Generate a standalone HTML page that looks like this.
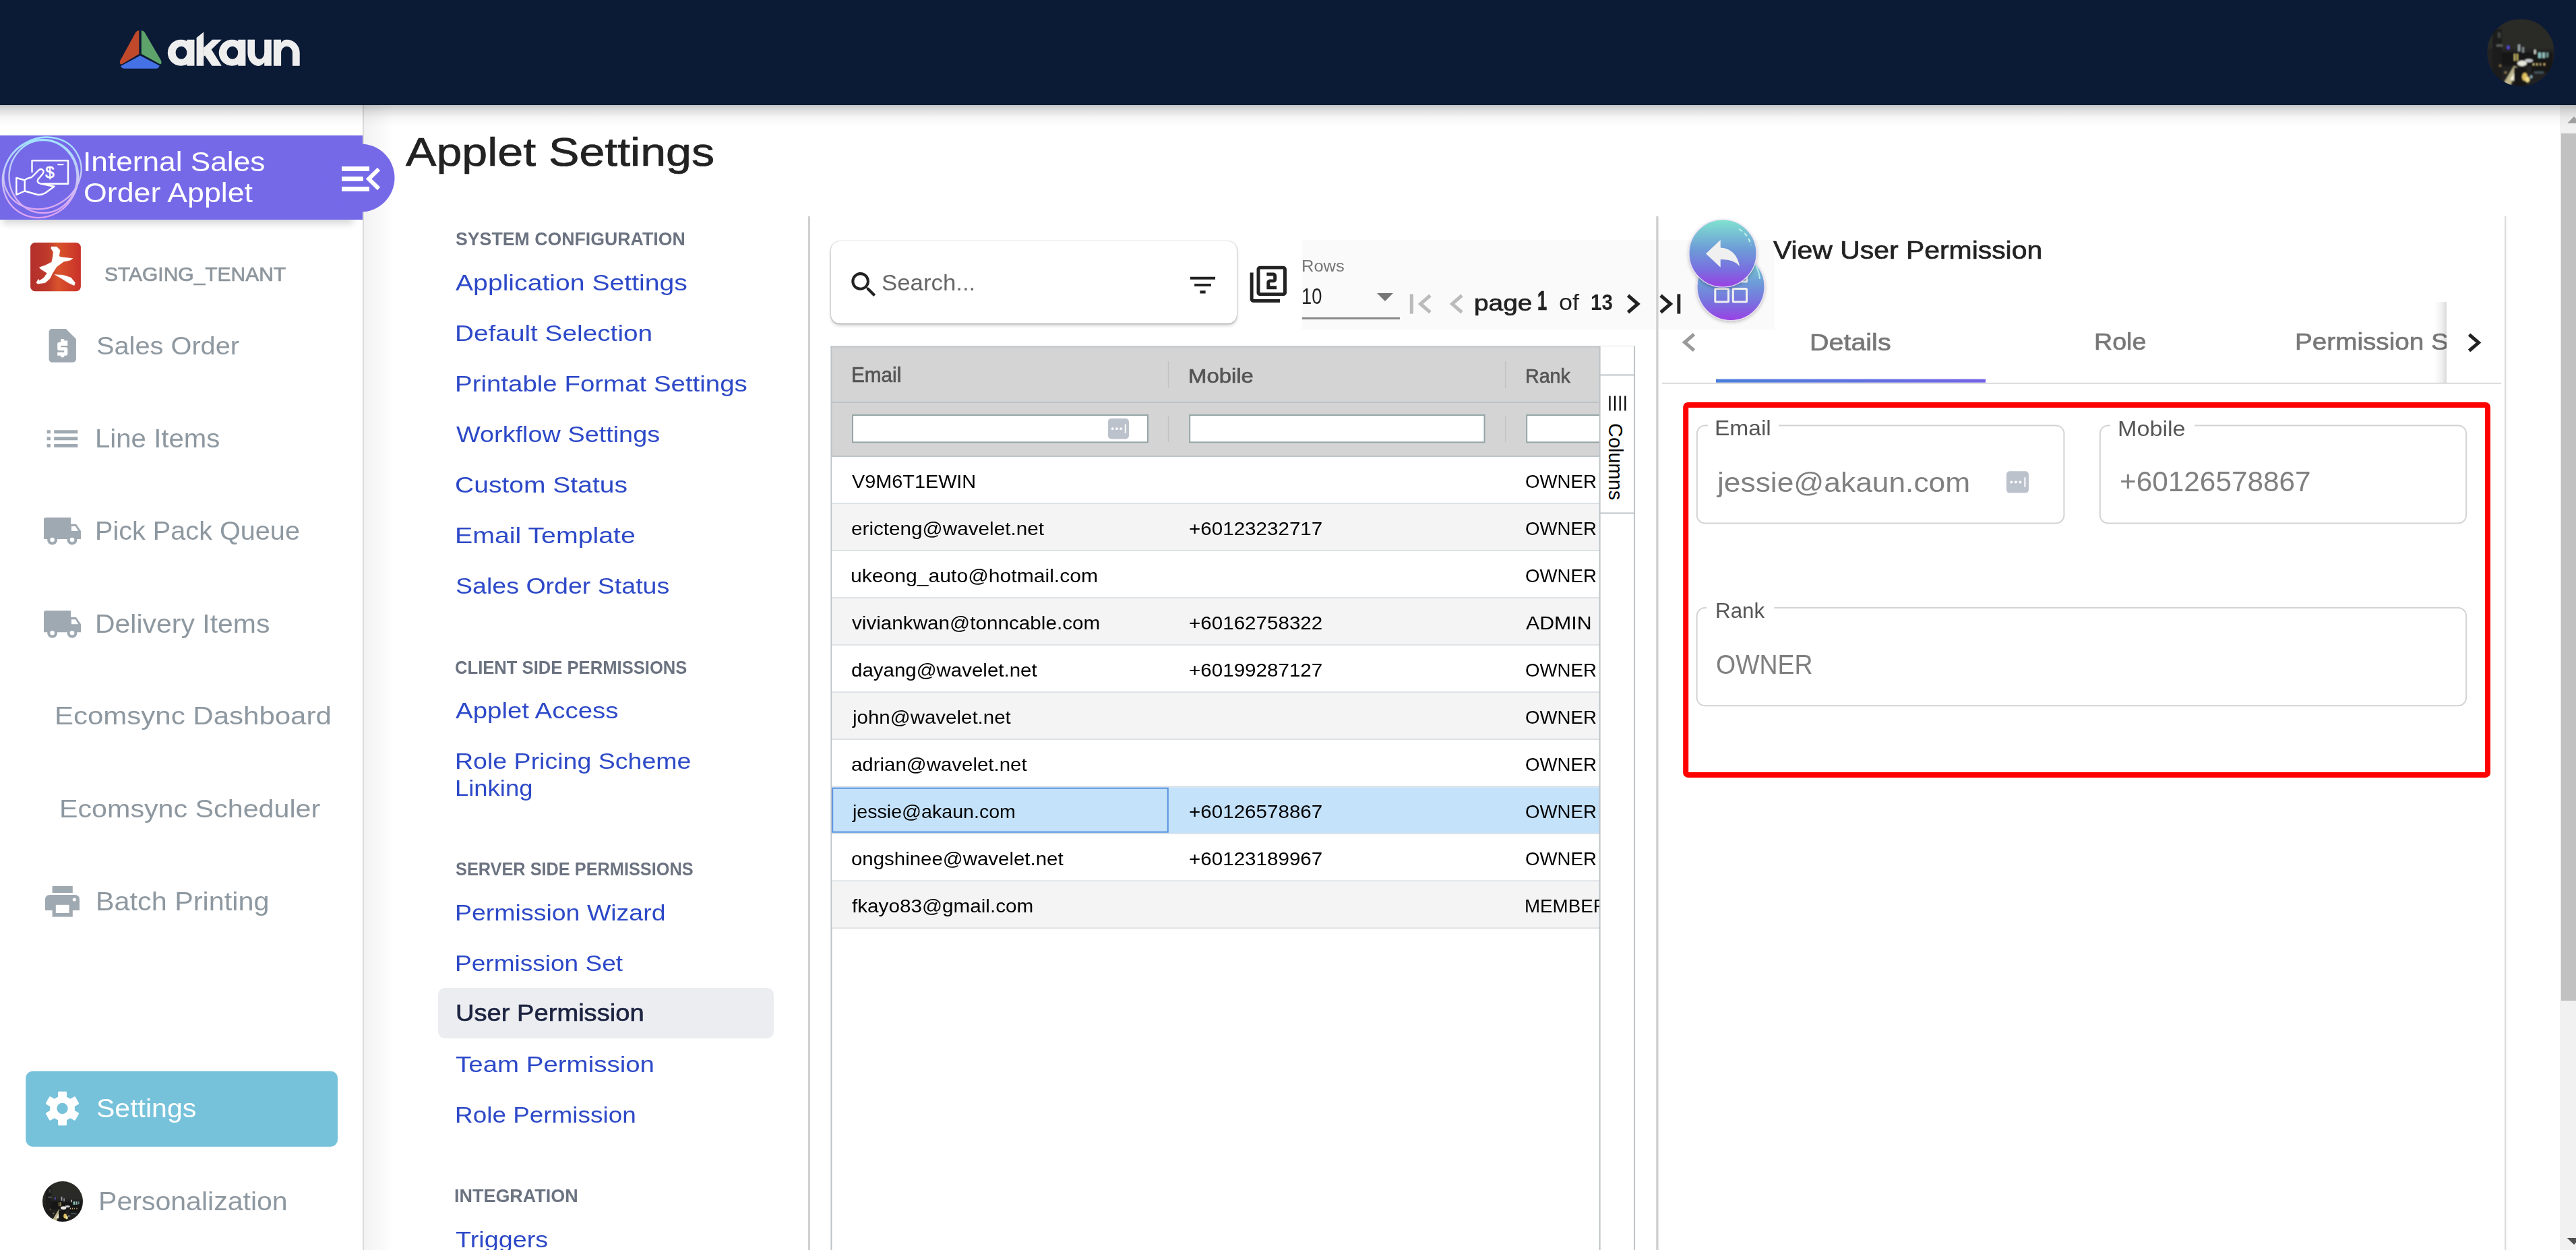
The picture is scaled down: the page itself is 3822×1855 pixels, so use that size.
<!DOCTYPE html>
<html><head><meta charset="utf-8"><title>Applet Settings</title>
<style>
html,body{margin:0;padding:0;width:3822px;height:1855px;overflow:hidden;background:#fff;position:relative}
.t{position:absolute;white-space:nowrap;transform-origin:0 0;}
</style></head><body>
<svg width="0" height="0" style="position:absolute"><filter id="erode" x="-2%" y="-20%" width="104%" height="140%"><feMorphology operator="erode" radius="0.38"/></filter></svg>
<div style="position:absolute;left:0;top:0;width:3822px;height:156px;background:#0b1a35"></div><div style="position:absolute;left:0;top:156px;width:3822px;height:32px;background:linear-gradient(rgba(0,0,0,0.22),rgba(0,0,0,0.12) 25%,rgba(0,0,0,0.035) 58%,rgba(0,0,0,0) 100%);z-index:5"></div><div style="position:absolute;left:538px;top:156px;width:2px;height:1699px;background:#dadada"></div><div style="position:absolute;left:540px;top:156px;width:45px;height:1699px;background:linear-gradient(90deg,rgba(0,0,0,0.05),rgba(0,0,0,0.0))"></div><div style="position:absolute;left:1233px;top:358px;width:602px;height:122px;background:#fff;border-radius:13px;box-shadow:0 3px 5px rgba(0,0,0,0.2),0 1px 2px rgba(0,0,0,0.15),0 0 2px rgba(0,0,0,0.28)"></div><div style="position:absolute;left:0;top:201px;width:520px;height:125px;box-shadow:4px 6px 10px rgba(0,0,0,0.16)"></div>
<svg style="position:absolute;left:0;top:0" width="3822" height="1855" viewBox="0 0 3822 1855"><defs>
<linearGradient id="ring" gradientUnits="userSpaceOnUse" x1="0" y1="203" x2="0" y2="324"><stop offset="0" stop-color="#9fe3ff"/><stop offset="0.5" stop-color="#c9c6f5"/><stop offset="1" stop-color="#e0a0f3"/></linearGradient>
<linearGradient id="fab" x1="0" y1="0" x2="0" y2="1"><stop offset="0" stop-color="#80e3cf"/><stop offset="0.45" stop-color="#6d9ad8"/><stop offset="0.75" stop-color="#7a6ee0"/><stop offset="1" stop-color="#9a40e3"/></linearGradient>
<linearGradient id="tabind" x1="0" y1="0" x2="1" y2="0"><stop offset="0" stop-color="#4a7fdb"/><stop offset="1" stop-color="#7565e6"/></linearGradient>
<linearGradient id="tenant" x1="0" y1="0" x2="1" y2="0"><stop offset="0" stop-color="#b22f2b"/><stop offset="0.35" stop-color="#bf3a2b"/><stop offset="0.55" stop-color="#d9532c"/><stop offset="1" stop-color="#c9312a"/></linearGradient>
<radialGradient id="city" cx="0.5" cy="0.75" r="0.6"><stop offset="0" stop-color="#6b5a3a"/><stop offset="0.5" stop-color="#2d2a26"/><stop offset="1" stop-color="#262525"/></radialGradient>
<linearGradient id="tabshadow" x1="0" y1="0" x2="1" y2="0"><stop offset="0" stop-color="#000" stop-opacity="0"/><stop offset="1" stop-color="#000" stop-opacity="0.13"/></linearGradient>
<filter id="blur1" x="-5%" y="-5%" width="110%" height="110%"><feGaussianBlur stdDeviation="1.3"/></filter><symbol id="citysym" viewBox="0 0 100 100"><clipPath id="cc"><circle cx="50" cy="50" r="50"/></clipPath><g clip-path="url(#cc)"><g filter="url(#blur1)">
<rect x="0" y="0" width="100" height="100" fill="#242321"/>
<rect x="0" y="0" width="100" height="45" fill="#2a2927"/>
<rect x="8" y="15" width="14" height="80" fill="#1c1d1c"/><rect x="14" y="38" width="9" height="3" fill="#5a5f5c"/><rect x="16" y="20" width="4" height="8" fill="#3f4442"/>
<rect x="22" y="50" width="75" height="20" fill="#171615"/>
<rect x="30" y="40" width="3" height="5" fill="#5b4de0"/>
<rect x="46" y="38" width="3" height="10" fill="#9aa4a8"/><rect x="52" y="42" width="3" height="8" fill="#7d8587"/>
<rect x="70" y="46" width="2.5" height="6" fill="#d8d8d0"/>
<rect x="76" y="50" width="4" height="8" fill="#8fc4c0"/><rect x="82" y="50" width="4" height="8" fill="#8fb8b4"/><rect x="88" y="50" width="3" height="7" fill="#6d8f8c"/>
<rect x="40" y="52" width="2" height="10" fill="#c8b870"/><rect x="44" y="52" width="2" height="10" fill="#c0b060"/>
<ellipse cx="52" cy="66" rx="7" ry="4" fill="#e8e8e0"/><ellipse cx="62" cy="62" rx="6" ry="2.5" fill="#c8ccd0"/>
<path d="M22,100 L40,70 L46,72 L34,100 Z" fill="#d8d0a0" opacity="0.85"/>
<path d="M34,90 L44,74 L48,76 L40,92 Z" fill="#f4f0d8"/>
<rect x="40" y="72" width="18" height="28" fill="#141312"/>
<ellipse cx="56" cy="86" rx="4" ry="6" fill="#e0c060"/><ellipse cx="60" cy="90" rx="3" ry="4" fill="#f0e090"/>
<rect x="66" y="68" width="30" height="12" fill="#191817"/>
<rect x="68" y="66" width="2" height="3" fill="#d0c080"/><rect x="73" y="66" width="2" height="3" fill="#c8b878"/><rect x="78" y="66" width="2" height="3" fill="#b0a070"/><rect x="84" y="66" width="2" height="3" fill="#d0b070"/>
<rect x="70" y="78" width="14" height="3" fill="#556a78" opacity="0.7"/><rect x="64" y="84" width="3" height="4" fill="#8aa8b8"/>
<rect x="18" y="68" width="3" height="3" fill="#c0a060" opacity="0.6"/><rect x="26" y="78" width="3" height="3" fill="#d0b070" opacity="0.6"/>
</g></g></symbol>
<filter id="fabsh" x="-20%" y="-20%" width="140%" height="140%"><feDropShadow dx="0" dy="2" stdDeviation="2.5" flood-opacity="0.25"/></filter>
</defs><path d="M206.3,45.2 Q203.5,44.8 201.2,48.2 L178.5,89.5 Q176.2,95 180.5,95.6 L206.3,80.3 Z" fill="#c0492b"/><path d="M209.8,45.2 Q212.5,44.8 214.8,48.2 L238.8,89.5 Q241,95 237.5,95.3 L209.8,80.0 Z" fill="#5ea46a"/><path d="M208,82.6 L236.8,97.6 Q235.5,101.8 231.5,101.8 L184.5,101.8 Q180.5,101.8 179.2,98 Z" fill="#4571e6"/><ellipse cx="268.3" cy="78.25" rx="19.5" ry="19.45" fill="#eeeeee"/><rect x="277.3" y="58.8" width="11.2" height="38.9" fill="#eeeeee"/><ellipse cx="268.95" cy="78.3" rx="8.35" ry="9.5" fill="#0b1a35"/><ellipse cx="344.20000000000005" cy="78.25" rx="19.5" ry="19.45" fill="#eeeeee"/><rect x="353.20000000000005" y="58.8" width="11.2" height="38.9" fill="#eeeeee"/><ellipse cx="344.85" cy="78.3" rx="8.35" ry="9.5" fill="#0b1a35"/><path d="M291.6,56 L302.2,47.4 L302.2,97.7 L291.6,97.7 Z" fill="#eeeeee"/><path d="M302.2,70.8 L315.2,58.8 L328.9,58.8 L309.5,77.5 L302.2,84 Z" fill="#eeeeee"/><path d="M302.2,79 L311.5,70 L328.9,97.7 L314.6,97.7 L305,84 Z" fill="#eeeeee"/><path d="M367.4,58.8 L378,58.8 L378,78 A7.1,9.8 0 0 0 392.2,78 L392.2,58.8 L402.8,58.8 L402.8,97.7 L392.2,97.7 L392.2,92.5 Q388,97.9 383.5,97.9 A16.5,19.6 0 0 1 367.4,78 Z" fill="#eeeeee"/><path d="M405.9,97.7 L417.1,97.7 L417.1,78.3 A8.4,9.5 0 0 1 433.9,78.3 L433.9,97.7 L444.7,97.7 L444.7,78.3 A19.4,19.5 0 0 0 425.3,58.8 Q420,58.8 417.1,63.5 L417.1,58.8 L405.9,58.8 Z" fill="#eeeeee"/><use href="#citysym" x="3690" y="28" width="100" height="100"/><rect x="0" y="201" width="538.00" height="125.00" rx="0" fill="#7569e8" /><circle cx="535" cy="264" r="50.5" fill="#7569e8"/><path d="M115.09,229.30 A59,51 -28 1 1 10.91,284.70 A59,51 -28 1 1 115.09,229.30 Z" fill="none" stroke="url(#ring)" stroke-width="2.4"/><path d="M107.63,292.50 A55,58.5 30 1 1 12.37,237.50 A55,58.5 30 1 1 107.63,292.50 Z" fill="none" stroke="url(#ring)" stroke-width="2.4"/><path d="M114.50,262.00 A50.5,54 0 1 1 13.50,262.00 A50.5,54 0 1 1 114.50,262.00 Z" fill="none" stroke="url(#ring)" stroke-width="2.4"/><g fill="none" stroke="#fff" stroke-width="2.4" stroke-linejoin="round" stroke-linecap="round"><path d="M47.5,255 L47.5,238.2 L101,238.2 L101,272.8 L63,272.8"/><path d="M86.4,244.1 L93.4,244.1"/><path d="M24.3,264 L36.7,267.4 L36.7,283.5 L24.3,289 Z"/><path d="M36.7,267.4 Q40,264.5 47,263 L58,252 Q62,249.5 64.5,253.5 Q65,256 63,258.5 L56.5,266 Q54,271 60,272.6 L80.5,276.8 L67,286.5 Q62,289.5 56,289 L36.7,283.5"/></g><text x="74" y="263.5" font-family="Liberation Sans" font-size="24" font-weight="400" fill="#fff" stroke="#fff" stroke-width="0.6" text-anchor="middle">$</text><rect x="507" y="247" width="41.00" height="7.00" rx="0" fill="#fff" /><rect x="507" y="262" width="32.00" height="7.00" rx="0" fill="#fff" /><rect x="507" y="277" width="41.00" height="7.00" rx="0" fill="#fff" /><path d="M562,251 L547,265.5 L562,280" fill="none" stroke="#fff" stroke-width="6"/><rect x="45.1" y="360.1" width="74.80" height="72.10" rx="7" fill="url(#tenant)" /><path d="M76.1,366.2 84.2,366.2 89.0,371.3 87.6,380.2 90.3,381.5 108.0,383.6 103.9,386.3 94.4,388.3 84.2,395.8 78.1,405.3 74.0,413.5 67.2,419.6 56.3,421.3 53.9,419.6 57.0,414.2 58.7,416.6 65.2,412.1 69.9,405.3 60.4,399.2 58.4,396.8 67.2,393.8 76.7,389.0 78.4,380.9 79.1,374.0 75.7,368.6 Z" fill="#fff" stroke="#fff" stroke-width="0.5" stroke-linejoin="round"/><path d="M81.2,407.4 94.4,408.4 105.3,412.1 111.4,419.6 110.1,423.7 101.2,419.6 91.7,413.5 Z" fill="#fff" stroke="#fff" stroke-width="0.5" stroke-linejoin="round"/><path transform="translate(62.5,483) scale(2.52,2.49)" fill="#9fa9b2" d="M14 2H6c-1.1 0-1.99.9-1.99 2L4 20c0 1.1.89 2 1.99 2H18c1.1 0 2-.9 2-2V8l-6-6zm1 10h-4v1h3c.55 0 1 .45 1 1v3c0 .55-.45 1-1 1h-1v1h-2v-1H9v-2h4v-1h-3c-.55 0-1-.45-1-1v-3c0-.55.45-1 1-1h1V8h2v1h2v2z"/><rect x="69.6" y="638.3" width="5.30" height="5.00" rx="0" fill="#9fa9b2" /><rect x="80.2" y="638.3" width="35.10" height="5.00" rx="0" fill="#9fa9b2" /><rect x="69.6" y="648.3" width="5.30" height="5.00" rx="0" fill="#9fa9b2" /><rect x="80.2" y="648.3" width="35.10" height="5.00" rx="0" fill="#9fa9b2" /><rect x="69.6" y="658.9" width="5.30" height="5.00" rx="0" fill="#9fa9b2" /><rect x="80.2" y="658.9" width="35.10" height="5.00" rx="0" fill="#9fa9b2" /><g transform="translate(0,0)"><path d="M65,771 Q65,768 68,768 L105,768 L105,777.8 L113,777.8 L120,788 L120,800 L65,800 Z" fill="#9fa9b2"/><path d="M106,781 L112,781 L116,788 L106,788 Z" fill="#fff"/><circle cx="77.6" cy="801" r="7.5" fill="#9fa9b2"/><circle cx="107" cy="801" r="7.5" fill="#9fa9b2"/><circle cx="77.6" cy="801" r="3.3" fill="#fff"/><circle cx="107" cy="801" r="3.3" fill="#fff"/></g><g transform="translate(0,138.3)"><path d="M65,771 Q65,768 68,768 L105,768 L105,777.8 L113,777.8 L120,788 L120,800 L65,800 Z" fill="#9fa9b2"/><path d="M106,781 L112,781 L116,788 L106,788 Z" fill="#fff"/><circle cx="77.6" cy="801" r="7.5" fill="#9fa9b2"/><circle cx="107" cy="801" r="7.5" fill="#9fa9b2"/><circle cx="77.6" cy="801" r="3.3" fill="#fff"/><circle cx="107" cy="801" r="3.3" fill="#fff"/></g><rect x="77.6" y="1315" width="30.20" height="10.00" rx="0" fill="#9fa9b2" /><path d="M67,1335 Q67,1328 74,1328 L111,1328 Q118,1328 118,1335 L118,1351 L67,1351 Z" fill="#9fa9b2"/><rect x="77.6" y="1342.4" width="30.20" height="18.20" rx="0" fill="#9fa9b2" /><rect x="82.8" y="1342.8" width="19.80" height="12.20" rx="0" fill="#fff" /><circle cx="110.3" cy="1335" r="2.6" fill="#fff"/><rect x="38.2" y="1589.4" width="462.80" height="112.40" rx="11" fill="#76c2da" /><g><rect x="86.0" y="1619.7" width="13" height="12" rx="1.5" fill="#fff" transform="rotate(0 92.5 1645)"/><rect x="86.0" y="1619.7" width="13" height="12" rx="1.5" fill="#fff" transform="rotate(60 92.5 1645)"/><rect x="86.0" y="1619.7" width="13" height="12" rx="1.5" fill="#fff" transform="rotate(120 92.5 1645)"/><rect x="86.0" y="1619.7" width="13" height="12" rx="1.5" fill="#fff" transform="rotate(180 92.5 1645)"/><rect x="86.0" y="1619.7" width="13" height="12" rx="1.5" fill="#fff" transform="rotate(240 92.5 1645)"/><rect x="86.0" y="1619.7" width="13" height="12" rx="1.5" fill="#fff" transform="rotate(300 92.5 1645)"/><circle cx="92.5" cy="1645" r="18.5" fill="#fff"/><circle cx="92.5" cy="1645" r="8.2" fill="#76c2da"/></g><use href="#citysym" x="63" y="1753" width="60" height="60"/><rect x="650" y="1466" width="498.00" height="75.00" rx="10" fill="#ecedf1" /><rect x="1199" y="321" width="3.00" height="1534.00" rx="0" fill="#d0d0d0" /><rect x="2457.2" y="321" width="3.40" height="1534.00" rx="0" fill="#d0d0d0" /><rect x="3716" y="321" width="2.40" height="1534.00" rx="0" fill="#dcdcdc" /><rect x="1932" y="356" width="701.00" height="133.00" rx="0" fill="#fafafa" /><rect x="2457.2" y="356" width="3.40" height="133.00" rx="0" fill="#d0d0d0" /><path transform="translate(1257.15,397.95) scale(2.05)" fill="#222" d="M15.5 14h-.79l-.28-.27C15.41 12.59 16 11.11 16 9.5 16 5.91 13.09 3 9.5 3S3 5.91 3 9.5 5.91 16 9.5 16c1.61 0 3.09-.59 4.23-1.57l.27.28v.79l5 4.99L20.49 19l-4.99-5zm-6 0C7.01 14 5 11.99 5 9.5S7.01 5 9.5 5 14 7.01 14 9.5 11.99 14 9.5 14z"/><path transform="translate(1759.8,398.3) scale(2.06)" fill="#222" d="M10 18h4v-2h-4v2zM3 6v2h18V6H3zm3 7h12v-2H6v2z"/><path transform="translate(1852.2,392.2) scale(2.468)" fill="#222" d="M3 5H1v16c0 1.1.9 2 2 2h16v-2H3V5zm18-4H7c-1.1 0-2 .9-2 2v14c0 1.1.9 2 2 2h14c1.1 0 2-.9 2-2V3c0-1.1-.9-2-2-2zm0 16H7V3h14v14zm-4-4h-4v-2h2c1.1 0 2-.89 2-2V7c0-1.11-.9-2-2-2h-4v2h4v2h-2c-1.1 0-2 .89-2 2v4h6v-2z"/><path d="M2043,435 L2067,435 L2055,447 Z" fill="#777"/><rect x="1932" y="470.9" width="145.00" height="3.10" rx="0" fill="#8a8a8a" /><rect x="2091.8" y="436.4" width="5.20" height="29.20" rx="0" fill="#bbb" /><path d="M2122,438.5 L2107.5,451 L2122,463.5" fill="none" stroke="#bbb" stroke-width="5"/><path d="M2169,438.5 L2154.5,451 L2169,463.5" fill="none" stroke="#bbb" stroke-width="5"/><path d="M2415.5,438.5 L2430,451 L2415.5,463.5" fill="none" stroke="#222" stroke-width="5"/><path d="M2464,438.5 L2478.5,451 L2464,463.5" fill="none" stroke="#222" stroke-width="5"/><rect x="2488.4" y="436.4" width="4.90" height="29.20" rx="0" fill="#222" /><rect x="1234" y="514" width="1139.00" height="163.00" rx="0" fill="#d4d4d4" /><rect x="1232.4" y="513.5" width="1193.60" height="2.00" rx="0" fill="#bdc3c7" /><rect x="1232.4" y="513.5" width="2.00" height="1341.50" rx="0" fill="#bdc3c7" /><rect x="1234" y="596" width="1139.00" height="2.00" rx="0" fill="#bdc3c7" /><rect x="1234" y="676" width="1139.00" height="2.00" rx="0" fill="#bdc3c7" /><rect x="1732.8" y="536" width="1.50" height="40.00" rx="0" fill="#c2c2c2" /><rect x="1732.8" y="617" width="1.50" height="39.00" rx="0" fill="#c2c2c2" /><rect x="2232.9" y="536" width="1.50" height="40.00" rx="0" fill="#c2c2c2" /><rect x="2232.9" y="617" width="1.50" height="39.00" rx="0" fill="#c2c2c2" /><rect x="1265" y="616" width="438" height="40.3" fill="#fff" stroke="#95a5a6" stroke-width="2"/><rect x="1765.2" y="616" width="437.29999999999995" height="40.3" fill="#fff" stroke="#95a5a6" stroke-width="2"/><rect x="2265.2" y="616" width="153.80000000000018" height="40.3" fill="#fff" stroke="#95a5a6" stroke-width="2"/><rect x="1234.4" y="678.0" width="1138.60" height="69.03" rx="0" fill="#ffffff" /><rect x="1234.4" y="746.03" width="1138.60" height="2.00" rx="0" fill="#dde1e4" /><rect x="1234.4" y="748.03" width="1138.60" height="69.03" rx="0" fill="#f4f4f4" /><rect x="1234.4" y="816.06" width="1138.60" height="2.00" rx="0" fill="#dde1e4" /><rect x="1234.4" y="818.06" width="1138.60" height="69.03" rx="0" fill="#ffffff" /><rect x="1234.4" y="886.0899999999999" width="1138.60" height="2.00" rx="0" fill="#dde1e4" /><rect x="1234.4" y="888.09" width="1138.60" height="69.03" rx="0" fill="#f4f4f4" /><rect x="1234.4" y="956.12" width="1138.60" height="2.00" rx="0" fill="#dde1e4" /><rect x="1234.4" y="958.12" width="1138.60" height="69.03" rx="0" fill="#ffffff" /><rect x="1234.4" y="1026.15" width="1138.60" height="2.00" rx="0" fill="#dde1e4" /><rect x="1234.4" y="1028.15" width="1138.60" height="69.03" rx="0" fill="#f4f4f4" /><rect x="1234.4" y="1096.18" width="1138.60" height="2.00" rx="0" fill="#dde1e4" /><rect x="1234.4" y="1098.18" width="1138.60" height="69.03" rx="0" fill="#ffffff" /><rect x="1234.4" y="1166.21" width="1138.60" height="2.00" rx="0" fill="#dde1e4" /><rect x="1234.4" y="1168.21" width="1138.60" height="69.03" rx="0" fill="#c4e2fa" /><rect x="1234.4" y="1236.24" width="1138.60" height="2.00" rx="0" fill="#dde1e4" /><rect x="1234.4" y="1238.24" width="1138.60" height="69.03" rx="0" fill="#ffffff" /><rect x="1234.4" y="1306.27" width="1138.60" height="2.00" rx="0" fill="#dde1e4" /><rect x="1234.4" y="1308.27" width="1138.60" height="69.03" rx="0" fill="#f4f4f4" /><rect x="1234.4" y="1376.3" width="1138.60" height="2.00" rx="0" fill="#dde1e4" /><rect x="1235.2" y="1169.7" width="497.6" height="65" fill="none" stroke="#5a93e0" stroke-width="2"/><rect x="2373" y="514" width="53.00" height="1341.00" rx="0" fill="#fff" /><rect x="2372.6" y="514" width="2.00" height="1341.00" rx="0" fill="#bdc3c7" /><rect x="2424" y="514" width="2.00" height="1341.00" rx="0" fill="#bdc3c7" /><rect x="2373" y="555.5" width="53.00" height="2.00" rx="0" fill="#bdc3c7" /><rect x="2373" y="760.5" width="53.00" height="2.00" rx="0" fill="#bdc3c7" /><rect x="2387.4" y="587.5" width="2.20" height="22.00" rx="0" fill="#000" /><rect x="2395.0" y="587.5" width="2.20" height="22.00" rx="0" fill="#000" /><rect x="2402.6" y="587.5" width="2.20" height="22.00" rx="0" fill="#000" /><rect x="2410.2000000000003" y="587.5" width="2.20" height="22.00" rx="0" fill="#000" /><g filter="url(#fabsh)"><circle cx="2568" cy="425.5" r="50" fill="url(#fab)" stroke="#eadcf6" stroke-width="1.2"/></g><path d="M2604,392 Q2610,402 2611,414" fill="none" stroke="#c8f6f0" stroke-width="2" opacity="0.8"/><g fill="none" stroke="#f0f0f0" stroke-width="3"><rect x="2544.8" y="428.5" width="19.7" height="19.5" rx="1"/><rect x="2571.3" y="428.5" width="20.2" height="19.5" rx="1"/><rect x="2544.8" y="398.5" width="19.7" height="19.5" rx="1"/><rect x="2571.3" y="398.5" width="20.2" height="19.5" rx="1"/></g><g filter="url(#fabsh)"><circle cx="2556" cy="376" r="50" fill="url(#fab)" stroke="#eadcf6" stroke-width="1.2"/></g><path d="M2580,340 Q2594,348 2598,364" fill="none" stroke="#c8f6f0" stroke-width="2" stroke-dasharray="6 4" opacity="0.9"/><path d="M2531,376.4 L2552.7,355.9 L2552.7,367.5 Q2576,369 2581,395 Q2572,384 2552.7,385 L2552.7,396.8 Z" fill="#f0f0f0"/><path d="M2513.5,496 L2499.5,508 L2513.5,520" fill="none" stroke="#9a9a9a" stroke-width="5"/><path d="M3663.5,496.5 L3677.5,508.5 L3663.5,520.5" fill="none" stroke="#222" stroke-width="5"/><rect x="2546" y="562.6" width="400.00" height="5.20" rx="0" fill="url(#tabind)" /><rect x="2466" y="567.8" width="1245.00" height="2.20" rx="0" fill="#dedede" /><rect x="2501.2" y="600.9" width="1189.8" height="549" rx="3" fill="none" stroke="#ff0000" stroke-width="8"/><rect x="2517.8" y="631.4" width="544.5999999999999" height="145.10000000000002" rx="12" fill="#fff" stroke="#d3d3d3" stroke-width="2"/><rect x="2534" y="629.4" width="105.00" height="5.00" rx="0" fill="#fff" /><rect x="3115.8" y="631.4" width="543.2999999999997" height="145.10000000000002" rx="12" fill="#fff" stroke="#d3d3d3" stroke-width="2"/><rect x="3131" y="629.4" width="125.00" height="5.00" rx="0" fill="#fff" /><rect x="2517.6" y="902" width="1141.5" height="145.20000000000005" rx="12" fill="#fff" stroke="#d3d3d3" stroke-width="2"/><rect x="2532" y="900" width="100.30" height="5.00" rx="0" fill="#fff" /><rect x="1643.9" y="621" width="31.10" height="30.40" rx="5" fill="#bcc2cc" /><circle cx="1650.74" cy="636.20" r="1.87" fill="#fff"/><circle cx="1656.96" cy="636.20" r="1.87" fill="#fff"/><circle cx="1663.18" cy="636.20" r="1.87" fill="#fff"/><rect x="1668.78" y="629.512" width="1.87" height="13.38" rx="0" fill="#fff" /><rect x="2976.9" y="699.3" width="33.10" height="32.30" rx="5" fill="#bcc2cc" /><circle cx="2984.18" cy="715.45" r="1.99" fill="#fff"/><circle cx="2990.80" cy="715.45" r="1.99" fill="#fff"/><circle cx="2997.42" cy="715.45" r="1.99" fill="#fff"/><rect x="3003.38" y="708.3439999999999" width="1.99" height="14.21" rx="0" fill="#fff" /><rect x="3798" y="156" width="24.00" height="1699.00" rx="0" fill="#f1f1f1" /><rect x="3800" y="198" width="22.00" height="1287.00" rx="0" fill="#c1c1c1" /><path d="M3809,183 L3829,183 L3819,172.8 Z" fill="#a3a3a3"/><path d="M3808.6,1837 L3829,1837 L3819,1847 Z" fill="#505050"/></svg>
<div class="t" style="left:122.94px;top:220.28px;font-size:41.24px;line-height:41.24px;color:#ffffff;font-weight:400;font-family:'Liberation Sans',sans-serif;transform:scaleX(1.0723);">Internal Sales</div><div class="t" style="left:124.30px;top:266.40px;font-size:40.39px;line-height:40.39px;color:#ffffff;font-weight:400;font-family:'Liberation Sans',sans-serif;transform:scaleX(1.1072);">Order Applet</div><div class="t" style="left:155.26px;top:391.81px;font-size:29.87px;line-height:29.87px;color:#8e969d;font-weight:400;font-family:'Liberation Sans',sans-serif;transform:scaleX(1.0036);-webkit-text-stroke:0.7px currentColor;">STAGING_TENANT</div><div class="t" style="left:142.76px;top:494.63px;font-size:37.40px;line-height:37.40px;color:#8e98a0;font-weight:400;font-family:'Liberation Sans',sans-serif;transform:scaleX(1.0630);filter:url(#erode);">Sales Order</div><div class="t" style="left:140.86px;top:630.76px;font-size:39.25px;line-height:39.25px;color:#8e98a0;font-weight:400;font-family:'Liberation Sans',sans-serif;transform:scaleX(1.0238);filter:url(#erode);">Line Items</div><div class="t" style="left:141.20px;top:768.73px;font-size:38.12px;line-height:38.12px;color:#8e98a0;font-weight:400;font-family:'Liberation Sans',sans-serif;transform:scaleX(1.0398);filter:url(#erode);">Pick Pack Queue</div><div class="t" style="left:140.80px;top:906.65px;font-size:38.68px;line-height:38.68px;color:#8e98a0;font-weight:400;font-family:'Liberation Sans',sans-serif;transform:scaleX(1.0589);filter:url(#erode);">Delivery Items</div><div class="t" style="left:81.32px;top:1043.97px;font-size:37.83px;line-height:37.83px;color:#8e98a0;font-weight:400;font-family:'Liberation Sans',sans-serif;transform:scaleX(1.1102);filter:url(#erode);">Ecomsync Dashboard</div><div class="t" style="left:87.78px;top:1182.43px;font-size:37.40px;line-height:37.40px;color:#8e98a0;font-weight:400;font-family:'Liberation Sans',sans-serif;transform:scaleX(1.1027);filter:url(#erode);">Ecomsync Scheduler</div><div class="t" style="left:141.57px;top:1318.73px;font-size:38.12px;line-height:38.12px;color:#8e98a0;font-weight:400;font-family:'Liberation Sans',sans-serif;transform:scaleX(1.0850);filter:url(#erode);">Batch Printing</div><div class="t" style="left:142.52px;top:1625.39px;font-size:39.11px;line-height:39.11px;color:#ffffff;font-weight:400;font-family:'Liberation Sans',sans-serif;transform:scaleX(1.0491);">Settings</div><div class="t" style="left:146.29px;top:1763.30px;font-size:39.68px;line-height:39.68px;color:#8e98a0;font-weight:400;font-family:'Liberation Sans',sans-serif;transform:scaleX(1.0347);filter:url(#erode);">Personalization</div><div class="t" style="left:602.00px;top:196.43px;font-size:59.73px;line-height:59.73px;color:#222222;font-weight:400;font-family:'Liberation Sans',sans-serif;transform:scaleX(1.1402);-webkit-text-stroke:0.7px currentColor;">Applet Settings</div><div class="t" style="left:675.68px;top:342.04px;font-size:26.88px;line-height:26.88px;color:#6b7280;font-weight:700;font-family:'Liberation Sans',sans-serif;transform:scaleX(0.9936);">SYSTEM CONFIGURATION</div><div class="t" style="left:676.30px;top:401.90px;font-size:34.13px;line-height:34.13px;color:#2d49c8;font-weight:400;font-family:'Liberation Sans',sans-serif;transform:scaleX(1.1472);filter:url(#erode);">Application Settings</div><div class="t" style="left:674.97px;top:476.90px;font-size:34.13px;line-height:34.13px;color:#2d49c8;font-weight:400;font-family:'Liberation Sans',sans-serif;transform:scaleX(1.1362);filter:url(#erode);">Default Selection</div><div class="t" style="left:675.00px;top:551.90px;font-size:34.13px;line-height:34.13px;color:#2d49c8;font-weight:400;font-family:'Liberation Sans',sans-serif;transform:scaleX(1.1267);filter:url(#erode);">Printable Format Settings</div><div class="t" style="left:676.50px;top:626.90px;font-size:34.13px;line-height:34.13px;color:#2d49c8;font-weight:400;font-family:'Liberation Sans',sans-serif;transform:scaleX(1.1088);filter:url(#erode);">Workflow Settings</div><div class="t" style="left:675.17px;top:701.90px;font-size:34.13px;line-height:34.13px;color:#2d49c8;font-weight:400;font-family:'Liberation Sans',sans-serif;transform:scaleX(1.1438);filter:url(#erode);">Custom Status</div><div class="t" style="left:674.93px;top:776.90px;font-size:34.13px;line-height:34.13px;color:#2d49c8;font-weight:400;font-family:'Liberation Sans',sans-serif;transform:scaleX(1.1514);filter:url(#erode);">Email Template</div><div class="t" style="left:675.83px;top:851.90px;font-size:34.13px;line-height:34.13px;color:#2d49c8;font-weight:400;font-family:'Liberation Sans',sans-serif;transform:scaleX(1.1005);filter:url(#erode);">Sales Order Status</div><div class="t" style="left:675.20px;top:977.54px;font-size:26.88px;line-height:26.88px;color:#6b7280;font-weight:700;font-family:'Liberation Sans',sans-serif;transform:scaleX(0.9531);">CLIENT SIDE PERMISSIONS</div><div class="t" style="left:676.30px;top:1036.90px;font-size:34.13px;line-height:34.13px;color:#2d49c8;font-weight:400;font-family:'Liberation Sans',sans-serif;transform:scaleX(1.1268);filter:url(#erode);">Applet Access</div><div class="t" style="left:675.07px;top:1111.90px;font-size:34.13px;line-height:34.13px;color:#2d49c8;font-weight:400;font-family:'Liberation Sans',sans-serif;transform:scaleX(1.0996);filter:url(#erode);">Role Pricing Scheme</div><div class="t" style="left:675.15px;top:1151.90px;font-size:34.13px;line-height:34.13px;color:#2d49c8;font-weight:400;font-family:'Liberation Sans',sans-serif;transform:scaleX(1.0677);filter:url(#erode);">Linking</div><div class="t" style="left:675.60px;top:1277.14px;font-size:26.88px;line-height:26.88px;color:#6b7280;font-weight:700;font-family:'Liberation Sans',sans-serif;transform:scaleX(0.9419);">SERVER SIDE PERMISSIONS</div><div class="t" style="left:675.07px;top:1336.90px;font-size:34.13px;line-height:34.13px;color:#2d49c8;font-weight:400;font-family:'Liberation Sans',sans-serif;transform:scaleX(1.0989);filter:url(#erode);">Permission Wizard</div><div class="t" style="left:675.11px;top:1411.90px;font-size:34.13px;line-height:34.13px;color:#2d49c8;font-weight:400;font-family:'Liberation Sans',sans-serif;transform:scaleX(1.0855);filter:url(#erode);">Permission Set</div><div class="t" style="left:675.62px;top:1486.42px;font-size:34.70px;line-height:34.70px;color:#1b2340;font-weight:400;font-family:'Liberation Sans',sans-serif;transform:scaleX(1.0989);-webkit-text-stroke:0.7px currentColor;">User Permission</div><div class="t" style="left:675.90px;top:1561.90px;font-size:34.13px;line-height:34.13px;color:#2d49c8;font-weight:400;font-family:'Liberation Sans',sans-serif;transform:scaleX(1.1272);filter:url(#erode);">Team Permission</div><div class="t" style="left:675.12px;top:1636.90px;font-size:34.13px;line-height:34.13px;color:#2d49c8;font-weight:400;font-family:'Liberation Sans',sans-serif;transform:scaleX(1.0815);filter:url(#erode);">Role Permission</div><div class="t" style="left:674.32px;top:1762.04px;font-size:26.88px;line-height:26.88px;color:#6b7280;font-weight:700;font-family:'Liberation Sans',sans-serif;transform:scaleX(1.0027);">INTEGRATION</div><div class="t" style="left:675.91px;top:1821.60px;font-size:34.13px;line-height:34.13px;color:#2d49c8;font-weight:400;font-family:'Liberation Sans',sans-serif;transform:scaleX(1.1078);filter:url(#erode);">Triggers</div><div class="t" style="left:1307.51px;top:403.16px;font-size:33.71px;line-height:33.71px;color:#666666;font-weight:400;font-family:'Liberation Sans',sans-serif;transform:scaleX(1.0322);filter:url(#erode);">Search...</div><div class="t" style="left:1931.01px;top:383.17px;font-size:23.89px;line-height:23.89px;color:#777777;font-weight:400;font-family:'Liberation Sans',sans-serif;transform:scaleX(1.0677);filter:url(#erode);">Rows</div><div class="t" style="left:1931.29px;top:423.80px;font-size:32.71px;line-height:32.71px;color:#222222;font-weight:400;font-family:'Liberation Sans',sans-serif;transform:scaleX(0.8352);">10</div><div class="t" style="left:2187.07px;top:432.59px;font-size:33.32px;line-height:33.32px;color:#222222;font-weight:400;font-family:'Liberation Sans',sans-serif;transform:scaleX(1.1671);-webkit-text-stroke:0.7px currentColor;">page</div><div class="t" style="left:2280.90px;top:427.08px;font-size:39.82px;line-height:39.82px;color:#222222;font-weight:700;font-family:'Liberation Sans',sans-serif;transform:scaleX(0.6429);-webkit-text-stroke:0.7px currentColor;">1</div><div class="t" style="left:2313.37px;top:432.21px;font-size:33.77px;line-height:33.77px;color:#222222;font-weight:400;font-family:'Liberation Sans',sans-serif;transform:scaleX(1.0689);">of</div><div class="t" style="left:2359.96px;top:432.26px;font-size:33.71px;line-height:33.71px;color:#222222;font-weight:700;font-family:'Liberation Sans',sans-serif;transform:scaleX(0.8742);">13</div><div class="t" style="left:1263.38px;top:542.09px;font-size:30.72px;line-height:30.72px;color:#555555;font-weight:400;font-family:'Liberation Sans',sans-serif;transform:scaleX(0.9670);-webkit-text-stroke:0.7px currentColor;">Email</div><div class="t" style="left:1762.73px;top:542.71px;font-size:29.87px;line-height:29.87px;color:#555555;font-weight:400;font-family:'Liberation Sans',sans-serif;transform:scaleX(1.1014);-webkit-text-stroke:0.7px currentColor;">Mobile</div><div class="t" style="left:2263.36px;top:542.71px;font-size:29.87px;line-height:29.87px;color:#555555;font-weight:400;font-family:'Liberation Sans',sans-serif;transform:scaleX(0.9594);-webkit-text-stroke:0.7px currentColor;">Rank</div><div class="t" style="left:2631.00px;top:353.05px;font-size:37.26px;line-height:37.26px;color:#222222;font-weight:400;font-family:'Liberation Sans',sans-serif;transform:scaleX(1.0977);-webkit-text-stroke:0.7px currentColor;">View User Permission</div><div class="t" style="left:2684.92px;top:490.18px;font-size:34.99px;line-height:34.99px;color:#777777;font-weight:400;font-family:'Liberation Sans',sans-serif;transform:scaleX(1.1279);-webkit-text-stroke:0.7px currentColor;">Details</div><div class="t" style="left:3107.06px;top:490.16px;font-size:35.84px;line-height:35.84px;color:#777777;font-weight:400;font-family:'Liberation Sans',sans-serif;transform:scaleX(1.0496);-webkit-text-stroke:0.7px currentColor;">Role</div><div class="t" style="left:2544.38px;top:620.23px;font-size:31.15px;line-height:31.15px;color:#555555;font-weight:400;font-family:'Liberation Sans',sans-serif;transform:scaleX(1.0764);filter:url(#erode);">Email</div><div class="t" style="left:2547.99px;top:694.64px;font-size:41.53px;line-height:41.53px;color:#808080;font-weight:400;font-family:'Liberation Sans',sans-serif;transform:scaleX(1.0677);filter:url(#erode);">jessie@akaun.com</div><div class="t" style="left:3142.33px;top:619.51px;font-size:32.00px;line-height:32.00px;color:#555555;font-weight:400;font-family:'Liberation Sans',sans-serif;transform:scaleX(1.0667);filter:url(#erode);">Mobile</div><div class="t" style="left:3144.62px;top:693.72px;font-size:41.67px;line-height:41.67px;color:#808080;font-weight:400;font-family:'Liberation Sans',sans-serif;transform:scaleX(1.0159);filter:url(#erode);">+60126578867</div><div class="t" style="left:2544.55px;top:891.35px;font-size:31.00px;line-height:31.00px;color:#555555;font-weight:400;font-family:'Liberation Sans',sans-serif;transform:scaleX(1.0108);filter:url(#erode);">Rank</div><div class="t" style="left:2545.54px;top:966.10px;font-size:40.39px;line-height:40.39px;color:#808080;font-weight:400;font-family:'Liberation Sans',sans-serif;transform:scaleX(0.9279);filter:url(#erode);">OWNER</div><div class="t" style="left:2412.45px;top:628.36px;font-size:29.58px;line-height:29.58px;color:#000000;font-weight:400;font-family:'Liberation Sans',sans-serif;transform:rotate(90deg) scaleX(0.9789);">Columns</div><div style="position:absolute;left:0;top:0;width:2373px;height:1855px;overflow:hidden"><div class="t" style="left:1264.20px;top:701.00px;font-size:27.88px;line-height:27.88px;color:#000000;font-weight:400;font-family:'Liberation Sans',sans-serif;transform:scaleX(1.0338);">V9M6T1EWIN</div><div class="t" style="left:2262.91px;top:701.00px;font-size:27.88px;line-height:27.88px;color:#000000;font-weight:400;font-family:'Liberation Sans',sans-serif;transform:scaleX(0.9907);">OWNER</div><div class="t" style="left:1263.27px;top:771.03px;font-size:27.88px;line-height:27.88px;color:#000000;font-weight:400;font-family:'Liberation Sans',sans-serif;transform:scaleX(1.0650);">ericteng@wavelet.net</div><div class="t" style="left:1763.91px;top:771.03px;font-size:27.88px;line-height:27.88px;color:#000000;font-weight:400;font-family:'Liberation Sans',sans-serif;transform:scaleX(1.0614);">+60123232717</div><div class="t" style="left:2262.91px;top:771.03px;font-size:27.88px;line-height:27.88px;color:#000000;font-weight:400;font-family:'Liberation Sans',sans-serif;transform:scaleX(0.9907);">OWNER</div><div class="t" style="left:1262.32px;top:841.06px;font-size:27.88px;line-height:27.88px;color:#000000;font-weight:400;font-family:'Liberation Sans',sans-serif;transform:scaleX(1.0805);">ukeong_auto@hotmail.com</div><div class="t" style="left:2262.91px;top:841.06px;font-size:27.88px;line-height:27.88px;color:#000000;font-weight:400;font-family:'Liberation Sans',sans-serif;transform:scaleX(0.9907);">OWNER</div><div class="t" style="left:1264.20px;top:911.09px;font-size:27.88px;line-height:27.88px;color:#000000;font-weight:400;font-family:'Liberation Sans',sans-serif;transform:scaleX(1.0644);">viviankwan@tonncable.com</div><div class="t" style="left:1763.91px;top:911.09px;font-size:27.88px;line-height:27.88px;color:#000000;font-weight:400;font-family:'Liberation Sans',sans-serif;transform:scaleX(1.0614);">+60162758322</div><div class="t" style="left:2264.20px;top:911.09px;font-size:27.88px;line-height:27.88px;color:#000000;font-weight:400;font-family:'Liberation Sans',sans-serif;transform:scaleX(1.0874);">ADMIN</div><div class="t" style="left:1263.28px;top:981.12px;font-size:27.88px;line-height:27.88px;color:#000000;font-weight:400;font-family:'Liberation Sans',sans-serif;transform:scaleX(1.0570);">dayang@wavelet.net</div><div class="t" style="left:1763.91px;top:981.12px;font-size:27.88px;line-height:27.88px;color:#000000;font-weight:400;font-family:'Liberation Sans',sans-serif;transform:scaleX(1.0614);">+60199287127</div><div class="t" style="left:2262.91px;top:981.12px;font-size:27.88px;line-height:27.88px;color:#000000;font-weight:400;font-family:'Liberation Sans',sans-serif;transform:scaleX(0.9907);">OWNER</div><div class="t" style="left:1265.12px;top:1051.15px;font-size:27.88px;line-height:27.88px;color:#000000;font-weight:400;font-family:'Liberation Sans',sans-serif;transform:scaleX(1.0575);">john@wavelet.net</div><div class="t" style="left:2262.91px;top:1051.15px;font-size:27.88px;line-height:27.88px;color:#000000;font-weight:400;font-family:'Liberation Sans',sans-serif;transform:scaleX(0.9907);">OWNER</div><div class="t" style="left:1263.28px;top:1121.18px;font-size:27.88px;line-height:27.88px;color:#000000;font-weight:400;font-family:'Liberation Sans',sans-serif;transform:scaleX(1.0560);">adrian@wavelet.net</div><div class="t" style="left:2262.91px;top:1121.18px;font-size:27.88px;line-height:27.88px;color:#000000;font-weight:400;font-family:'Liberation Sans',sans-serif;transform:scaleX(0.9907);">OWNER</div><div class="t" style="left:1265.09px;top:1191.21px;font-size:27.88px;line-height:27.88px;color:#000000;font-weight:400;font-family:'Liberation Sans',sans-serif;transform:scaleX(1.0253);">jessie@akaun.com</div><div class="t" style="left:1763.91px;top:1191.21px;font-size:27.88px;line-height:27.88px;color:#000000;font-weight:400;font-family:'Liberation Sans',sans-serif;transform:scaleX(1.0614);">+60126578867</div><div class="t" style="left:2262.91px;top:1191.21px;font-size:27.88px;line-height:27.88px;color:#000000;font-weight:400;font-family:'Liberation Sans',sans-serif;transform:scaleX(0.9907);">OWNER</div><div class="t" style="left:1263.28px;top:1261.24px;font-size:27.88px;line-height:27.88px;color:#000000;font-weight:400;font-family:'Liberation Sans',sans-serif;transform:scaleX(1.0559);">ongshinee@wavelet.net</div><div class="t" style="left:1763.91px;top:1261.24px;font-size:27.88px;line-height:27.88px;color:#000000;font-weight:400;font-family:'Liberation Sans',sans-serif;transform:scaleX(1.0614);">+60123189967</div><div class="t" style="left:2262.91px;top:1261.24px;font-size:27.88px;line-height:27.88px;color:#000000;font-weight:400;font-family:'Liberation Sans',sans-serif;transform:scaleX(0.9907);">OWNER</div><div class="t" style="left:1264.20px;top:1331.27px;font-size:27.88px;line-height:27.88px;color:#000000;font-weight:400;font-family:'Liberation Sans',sans-serif;transform:scaleX(1.0644);">fkayo83@gmail.com</div><div class="t" style="left:2262.03px;top:1331.27px;font-size:27.88px;line-height:27.88px;color:#000000;font-weight:400;font-family:'Liberation Sans',sans-serif;transform:scaleX(0.9951);">MEMBER</div></div><div style="position:absolute;left:0;top:0;width:3630px;height:1855px;overflow:hidden"><div class="t" style="left:3404.78px;top:490.16px;font-size:35.84px;line-height:35.84px;color:#777777;font-weight:400;font-family:'Liberation Sans',sans-serif;transform:scaleX(1.0792);-webkit-text-stroke:0.7px currentColor;">Permission S</div></div>
<div style="position:absolute;left:3612px;top:448px;width:18px;height:120px;background:linear-gradient(90deg,rgba(255,255,255,0),rgba(0,0,0,0.06) 60%,rgba(0,0,0,0.14))"></div>
</body></html>
